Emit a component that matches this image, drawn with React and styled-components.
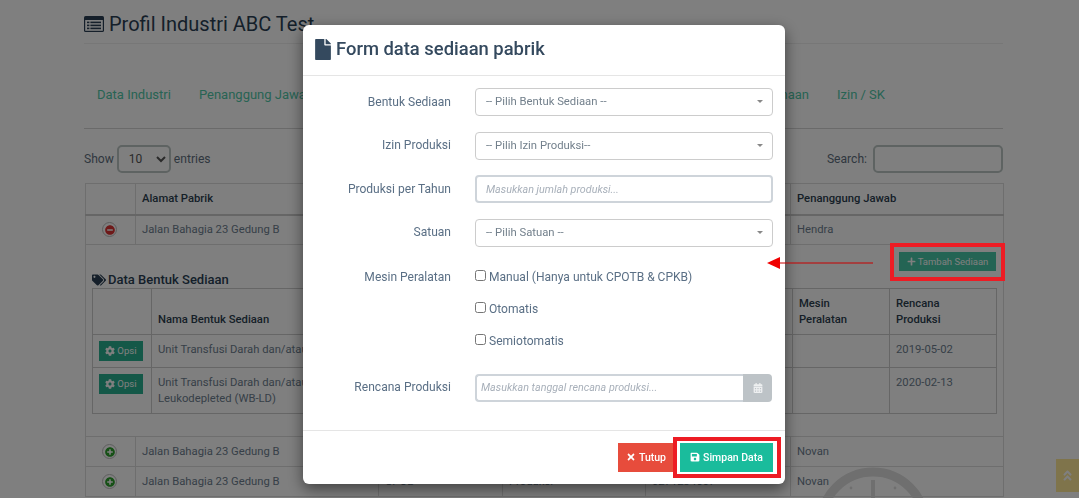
import React from 'react';
import styled, { createGlobalStyle } from 'styled-components';
import {
  FaTags, FaFile, FaCog, FaPlus, FaTimes, FaSave,
  FaCalendarAlt, FaAngleDoubleUp, FaMinusCircle, FaPlusCircle,
} from 'react-icons/fa';

const GlobalStyle = createGlobalStyle`
  html, body {
    margin: 0;
    height: 100%;
    overflow: hidden;
    background: #fff;
    font-family: Roboto, "Liberation Sans", sans-serif;
  }
`;

const Page = styled.div`
  position: relative;
  height: 498px;
  box-sizing: border-box;
  overflow: hidden;
  padding: 13px 76px 0 84px;
  color: #73879c;
  font-size: 12px;
`;

const PageTitle = styled.h3`
  display: flex;
  align-items: center;
  gap: 5px;
  margin: 0;
  height: 31px;
  padding-bottom: 8px;
  box-sizing: border-box;
  font-size: 20px;
  font-weight: 400;
  color: #2a3f54;
  line-height: 22px;
  border-bottom: 1px solid #eee;
`;

const Tabs = styled.nav`
  display: flex;
  align-items: center;
  height: 85px;
  box-sizing: border-box;
  padding: 17px 118px 0 13px;
  border-bottom: 1px solid #d5d5d5;
  font-size: 13px;
  color: #50c8a8;
`;

const Tab = styled.span`
  margin-right: 28px;
  white-space: nowrap;
  margin-left: ${p => (p.$push ? 'auto' : '0')};
  &:last-child { margin-right: 0; }
`;

const Toolbar = styled.div`
  display: flex;
  align-items: center;
  gap: 3px;
  margin-top: 16px;
  height: 28px;
  font-size: 12.1px;
  color: #5f6f80;
`;

const LengthSelect = styled.select`
  width: 54px;
  height: 28px;
  padding: 0 6px 0 6px;
  border: 2px solid #bcc6c4;
  border-radius: 5px;
  background: #fff;
  color: #555;
  font: 12px Roboto, sans-serif;
`;

const SearchLabel = styled.span`
  margin-left: auto;
  margin-right: 3px;
`;

const SearchInput = styled.input`
  width: 130px;
  height: 28px;
  box-sizing: border-box;
  border: 2px solid #bcc6c4;
  border-radius: 5px;
`;

const Table = styled.table`
  width: 918px;
  margin: 10px 0 0 1px;
  border-collapse: collapse;
  table-layout: fixed;
  font-size: 11.25px;
  color: #6e7f90;
  td, th {
    border: 1px solid #ddd;
    padding: 0 6px;
    text-align: left;
    height: 30px;
    box-sizing: border-box;
    overflow: hidden;
    white-space: nowrap;
  }
  th {
    height: 31px;
    color: #2c3e50;
    font-weight: 500;
    border-bottom: 2px solid #ccc;
  }
`;

const Col = styled.col`
  width: ${p => p.$w}px;
`;

const ToggleCell = styled.td`
  && { padding: 0 2px 0 0; text-align: center; line-height: 0; }
`;

const Toggle = styled.span`
  display: inline-flex;
  align-items: center;
  justify-content: center;
  width: 11px;
  height: 11px;
  border-radius: 50%;
  background: #fff;
  border: 1px solid #bbb;
  padding: 1px;
  font-size: 10px;
  color: ${p => (p.$open ? '#d33' : '#2ca02c')};
`;

const DetailCell = styled.td`
  && {
    height: 191px;
    padding: 7px 6px 22px 6px;
    vertical-align: top;
  }
`;

const AddRow = styled.div`
  display: flex;
  justify-content: flex-end;
  padding-right: 1px;
`;

const AddButton = styled.span`
  display: inline-flex;
  align-items: center;
  gap: 2px;
  height: 19px;
  width: 97px;
  justify-content: center;
  background: #48c8a8;
  color: #ffffff;
  font-size: 9.5px;
  svg { font-size: 9px; }
`;

const SubTitle = styled.h4`
  display: flex;
  align-items: center;
  gap: 2px;
  margin: 0;
  height: 17px;
  font-size: 13px;
  font-weight: 500;
  color: #2a3f54;
`;

const SubTable = styled.table`
  width: 904px;
  border-collapse: collapse;
  table-layout: fixed;
  font-size: 11.25px;
  color: #6e7f90;
  && td, && th {
    border: 1px solid #ccc;
    height: auto;
    padding: 7px 6px 6px;
    line-height: 16px;
    vertical-align: top;
    white-space: normal;
    border-bottom-width: 1px;
  }
  && th { vertical-align: bottom; padding: 7px 6px 6px; }
`;

const OptionButton = styled.span`
  display: flex;
  align-items: center;
  justify-content: center;
  gap: 2px;
  width: 44px;
  height: 20px;
  margin: -1px 0 0 0;
  background: #28b090;
  color: #ffffff;
  font-size: 9.6px;
  white-space: nowrap;
  svg { font-size: 10px; }
`;

const Watermark = styled.svg`
  position: absolute;
  left: 813px;
  top: 464px;
  width: 120px;
  height: 120px;
`;

const ScrollTop = styled.div`
  position: absolute;
  left: 1056px;
  top: 459px;
  width: 23px;
  height: 33px;
  display: flex;
  align-items: center;
  justify-content: center;
  background: #ffe896;
  color: #ffffff;
  font-size: 13px;
`;

const Backdrop = styled.div`
  position: fixed;
  inset: 0;
  background: rgba(0, 0, 0, 0.5);
`;

const Modal = styled.div`
  width: 482px;
  margin: 25px 0 0 303px;
  background: #fff;
  border-radius: 6px;
  box-shadow: 0 5px 15px rgba(0, 0, 0, 0.5);
  color: #5a6f85;
  font-size: 12.05px;
`;

const ModalHeader = styled.div`
  display: flex;
  align-items: center;
  gap: 5px;
  height: 50px;
  box-sizing: content-box;
  padding-left: 12px;
  border-bottom: 1px solid #e5e5e5;
  font-size: 18.4px;
  font-weight: 500;
  color: #34495e;
  line-height: 48px;
  svg { width: 16px; height: 21px; margin-bottom: 2px; }
`;

const ModalHeading = styled.span`
  margin-bottom: 2px;
`;

const ModalBody = styled.div`
  display: grid;
  grid-template-columns: 148px 298px;
  column-gap: 24px;
  row-gap: 15.6px;
  padding: 12px 0 28px;
`;

const Label = styled.label`
  display: flex;
  justify-content: flex-end;
  align-items: center;
  box-sizing: border-box;
  padding: ${p => (p.$tall ? '2px 0 0' : '0 0 1px')};
  height: ${p => (p.$tall ? '27px' : '28px')};
  white-space: nowrap;
  margin-top: ${p => (p.$down ? '5px' : '0')};
`;

const SelectBox = styled.div`
  position: relative;
  display: flex;
  align-items: center;
  height: 28px;
  box-sizing: border-box;
  padding: 0 0 1px 10px;
  border: 1px solid #ccc;
  border-radius: 4px;
  font-size: 11.3px;
  color: #73808c;
  &::after {
    content: '';
    position: absolute;
    right: 9px;
    top: 11px;
    border: 3px solid transparent;
    border-top-color: #888;
    border-bottom-width: 0;
  }
`;

const TextInput = styled.input`
  width: 100%;
  height: 28px;
  box-sizing: border-box;
  padding: 0 9px;
  border: 2px solid #ced4da;
  border-radius: 4px;
  outline: none;
  font: italic 10.75px Roboto, sans-serif;
  &::placeholder { color: #a8b0ba; }
`;

const Checks = styled.div`
  display: flex;
  flex-direction: column;
  gap: 5px;
`;

const CheckRow = styled.label`
  display: flex;
  align-items: center;
  box-sizing: border-box;
  padding-top: 2px;
  height: 27px;
  white-space: nowrap;
  input { margin: 0 3px 3px 0; width: 11px; height: 11px; }
`;

const DateGroup = styled.div`
  display: flex;
  width: 297px;
  height: 28px;
  margin-top: 5px;
`;

const DateInput = styled(TextInput)`
  flex: 1;
  min-width: 0;
  padding: 0 4px;
  border-radius: 4px 0 0 4px;
  border-right: 0;
`;

const DateAddon = styled.span`
  display: flex;
  align-items: center;
  justify-content: center;
  width: 29px;
  background: #bdc3c7;
  border-radius: 0 4px 4px 0;
  color: #eef0f1;
  font-size: 10px;
`;

const ModalFooter = styled.div`
  display: flex;
  justify-content: flex-end;
  gap: 6px;
  padding: 12px;
  border-top: 1px solid #e5e5e5;
`;

const FooterButton = styled.button`
  display: flex;
  align-items: center;
  justify-content: center;
  gap: 3px;
  width: ${p => p.$w}px;
  height: 29px;
  padding: 0;
  border: 0;
  background: ${p => p.$bg};
  color: #fff;
  font: 500 10.5px Roboto, sans-serif;
  svg { font-size: 10px; }
`;

const Highlight = styled.div`
  position: absolute;
  left: ${p => p.$x}px;
  top: ${p => p.$y}px;
  width: ${p => p.$w}px;
  height: ${p => p.$h}px;
  box-sizing: border-box;
  border: 4px solid #ed1c24;
`;

const Pointer = styled.svg`
  position: absolute;
  left: 765px;
  top: 255px;
  width: 110px;
  height: 16px;
`;

const ListIcon = () => (
  <svg width="20" height="16" viewBox="0 0 20 16">
    <rect width="20" height="16" rx="1.6" fill="#2a3f54" />
    <rect x="1.2" y="4" width="17.6" height="10.8" fill="#fff" />
    <g fill="#2a3f54">
      <rect x="3" y="5.6" width="2.4" height="1.6" />
      <rect x="6.4" y="5.6" width="10.6" height="1.6" />
      <rect x="3" y="8.6" width="2.4" height="1.6" />
      <rect x="6.4" y="8.6" width="10.6" height="1.6" />
      <rect x="3" y="11.6" width="2.4" height="1.6" />
      <rect x="6.4" y="11.6" width="10.6" height="1.6" />
    </g>
  </svg>
);

const App = () => (
  <>
    <GlobalStyle />
    <Page>
      <PageTitle><ListIcon />Profil Industri ABC Test</PageTitle>
      <Tabs>
        <Tab>Data Industri</Tab>
        <Tab>Penanggung Jawab</Tab>
        <Tab $push>Pembinaan</Tab>
        <Tab>Izin / SK</Tab>
      </Tabs>
      <Toolbar>
        Show
        <LengthSelect defaultValue="10"><option>10</option></LengthSelect>
        entries
        <SearchLabel>Search:</SearchLabel>
        <SearchInput />
      </Toolbar>
      <Table>
        <colgroup>
          <Col $w={50} /><Col $w={243} /><Col $w={124} /><Col $w={143} /><Col $w={145} /><Col $w={213} />
        </colgroup>
        <thead>
          <tr>
            <th />
            <th>Alamat Pabrik</th>
            <th />
            <th />
            <th />
            <th>Penanggung Jawab</th>
          </tr>
        </thead>
        <tbody>
          <tr>
            <ToggleCell><Toggle $open><FaMinusCircle /></Toggle></ToggleCell>
            <td>Jalan Bahagia 23 Gedung B</td>
            <td />
            <td />
            <td />
            <td>Hendra</td>
          </tr>
          <tr>
            <DetailCell colSpan={6}>
              <AddRow><AddButton><FaPlus />Tambah Sediaan</AddButton></AddRow>
              <SubTitle><FaTags size={14} />Data Bentuk Sediaan</SubTitle>
              <SubTable>
                <colgroup>
                  <Col $w={59} /><Col $w={231} /><Col $w={120} /><Col $w={150} /><Col $w={140} /><Col $w={97} /><Col $w={107} />
                </colgroup>
                <thead>
                  <tr>
                    <th />
                    <th>Nama Bentuk Sediaan</th>
                    <th />
                    <th />
                    <th />
                    <th>Mesin<br />Peralatan</th>
                    <th>Rencana<br />Produksi</th>
                  </tr>
                </thead>
                <tbody>
                  <tr>
                    <td><OptionButton><FaCog />Opsi</OptionButton></td>
                    <td>Unit Transfusi Darah dan/atau</td>
                    <td />
                    <td />
                    <td />
                    <td />
                    <td>2019-05-02</td>
                  </tr>
                  <tr>
                    <td><OptionButton><FaCog />Opsi</OptionButton></td>
                    <td>Unit Transfusi Darah dan/atau Leukodepleted (WB-LD)</td>
                    <td />
                    <td />
                    <td />
                    <td />
                    <td>2020-02-13</td>
                  </tr>
                </tbody>
              </SubTable>
            </DetailCell>
          </tr>
          <tr>
            <ToggleCell><Toggle><FaPlusCircle /></Toggle></ToggleCell>
            <td>Jalan Bahagia 23 Gedung B</td>
            <td />
            <td />
            <td />
            <td>Novan</td>
          </tr>
          <tr>
            <ToggleCell><Toggle><FaPlusCircle /></Toggle></ToggleCell>
            <td>Jalan Bahagia 23 Gedung B</td>
            <td>CPOB</td>
            <td>Produksi</td>
            <td>0271234567</td>
            <td>Novan</td>
          </tr>
        </tbody>
      </Table>
      <Watermark viewBox="0 0 120 120">
        <circle cx="60" cy="60" r="52" fill="none" stroke="#dedede" strokeWidth="9" />
        <rect x="58" y="16" width="4" height="44" fill="#dedede" />
        <circle cx="60" cy="18" r="1.4" fill="#dedede" />
        <circle cx="38" cy="24" r="1.4" fill="#dedede" />
        <circle cx="82" cy="24" r="1.4" fill="#dedede" />
      </Watermark>
      <ScrollTop><FaAngleDoubleUp /></ScrollTop>
    </Page>
    <Backdrop>
      <Modal>
        <ModalHeader><FaFile /><ModalHeading>Form data sediaan pabrik</ModalHeading></ModalHeader>
        <ModalBody>
          <Label>Bentuk Sediaan</Label>
          <SelectBox>-- Pilih Bentuk Sediaan --</SelectBox>
          <Label>Izin Produksi</Label>
          <SelectBox>-- Pilih Izin Produksi--</SelectBox>
          <Label>Produksi per Tahun</Label>
          <TextInput placeholder="Masukkan jumlah produksi..." />
          <Label>Satuan</Label>
          <SelectBox>-- Pilih Satuan --</SelectBox>
          <Label $tall>Mesin Peralatan</Label>
          <Checks>
            <CheckRow><input type="checkbox" />Manual (Hanya untuk CPOTB &amp; CPKB)</CheckRow>
            <CheckRow><input type="checkbox" />Otomatis</CheckRow>
            <CheckRow><input type="checkbox" />Semiotomatis</CheckRow>
          </Checks>
          <Label $down>Rencana Produksi</Label>
          <DateGroup>
            <DateInput placeholder="Masukkan tanggal rencana produksi..." />
            <DateAddon><FaCalendarAlt /></DateAddon>
          </DateGroup>
        </ModalBody>
        <ModalFooter>
          <FooterButton $w={56} $bg="#e74c3c"><FaTimes />Tutup</FooterButton>
          <FooterButton $w={93} $bg="#1abc9c"><FaSave />Simpan Data</FooterButton>
        </ModalFooter>
      </Modal>
    </Backdrop>
    <Highlight $x={890} $y={243} $w={115} $h={38} />
    <Highlight $x={673} $y={437} $w={108} $h={41} />
    <Pointer viewBox="0 0 110 16">
      <line x1="12" y1="8" x2="108" y2="8" stroke="#c80000" strokeWidth="1" />
      <polygon points="2,8 15,2 15,14" fill="#f00000" />
    </Pointer>
  </>
);

export default App;
